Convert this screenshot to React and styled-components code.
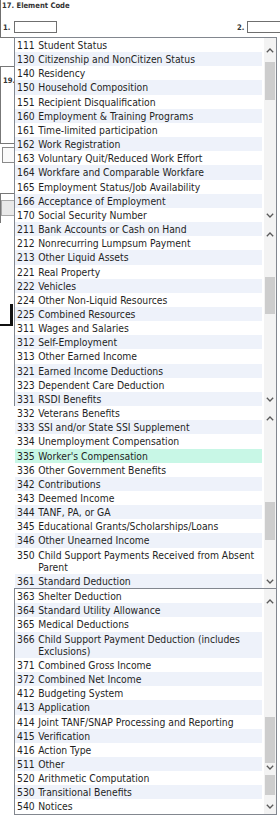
import styled, { createGlobalStyle } from 'styled-components'

// #region data
const panels = [
  {
    stripe: 1,
    borders: { top: true, left: true },
    thumb: { offset: 0, size: 38 },
    items: [
      ['111', 'Student Status'],
      ['130', 'Citizenship and NonCitizen Status'],
      ['140', 'Residency'],
      ['150', 'Household Composition'],
      ['151', 'Recipient Disqualification'],
      ['160', 'Employment & Training Programs'],
      ['161', 'Time-limited participation'],
      ['162', 'Work Registration'],
      ['163', 'Voluntary Quit/Reduced Work Effort'],
      ['164', 'Workfare and Comparable Workfare'],
      ['165', 'Employment Status/Job Availability'],
      ['166', 'Acceptance of Employment'],
      ['170', 'Social Security Number'],
    ],
  },
  {
    stripe: 0,
    borders: { left: true },
    thumb: { offset: 31, size: 37 },
    items: [
      ['211', 'Bank Accounts or Cash on Hand'],
      ['212', 'Nonrecurring Lumpsum Payment'],
      ['213', 'Other Liquid Assets'],
      ['221', 'Real Property'],
      ['222', 'Vehicles'],
      ['224', 'Other Non-Liquid Resources'],
      ['225', 'Combined Resources'],
      ['311', 'Wages and Salaries'],
      ['312', 'Self-Employment'],
      ['313', 'Other Earned Income'],
      ['321', 'Earned Income Deductions'],
      ['323', 'Dependent Care Deduction'],
      ['331', 'RSDI Benefits'],
    ],
  },
  {
    stripe: 1,
    borders: {},
    selected: '335',
    thumb: { offset: 72, size: 38 },
    items: [
      ['332', 'Veterans Benefits'],
      ['333', 'SSI and/or State SSI Supplement'],
      ['334', 'Unemployment Compensation'],
      ['335', "Worker's Compensation"],
      ['336', 'Other Government Benefits'],
      ['342', 'Contributions'],
      ['343', 'Deemed Income'],
      ['344', 'TANF, PA, or GA'],
      ['345', 'Educational Grants/Scholarships/Loans'],
      ['346', 'Other Unearned Income'],
      ['350', 'Child Support Payments Received from Absent Parent'],
      ['361', 'Standard Deduction'],
    ],
  },
  {
    stripe: 1,
    borders: { top: true, left: true, bottom: true },
    thumb: { offset: 104, size: 46 },
    extraThumb: true,
    items: [
      ['363', 'Shelter Deduction'],
      ['364', 'Standard Utility Allowance'],
      ['365', 'Medical Deductions'],
      ['366', 'Child Support Payment Deduction (includes Exclusions)'],
      ['371', 'Combined Gross Income'],
      ['372', 'Combined Net Income'],
      ['412', 'Budgeting System'],
      ['413', 'Application'],
      ['414', 'Joint TANF/SNAP Processing and Reporting'],
      ['415', 'Verification'],
      ['416', 'Action Type'],
      ['511', 'Other'],
      ['520', 'Arithmetic Computation'],
      ['530', 'Transitional Benefits'],
      ['540', 'Notices'],
    ],
  },
]
// #endregion

// #region styles
const GlobalStyle = createGlobalStyle`
  html, body {
    margin: 0;
    padding: 0;
    background: #fff;
  }
  body {
    font-family: "DejaVu Sans Condensed", "DejaVu Sans", sans-serif;
    color: #222;
  }
`

const Page = styled.div`
  width: 280px;
  height: 823px;
  overflow: hidden;
  background: #fff;
`

const Header = styled.div`
  height: 37px;
  box-sizing: border-box;
  border-left: 1px solid #6f6f6f;
  padding: 1px 0 0 1px;
`

const Title = styled.div`
  font-size: 7.6px;
  font-weight: 700;
  line-height: 10px;
  color: #333;
`

const FieldRow = styled.div`
  display: flex;
  justify-content: space-between;
  align-items: center;
  height: 12px;
  margin-top: 10px;
  margin-right: -12px;
`

const Field = styled.div`
  display: flex;
  align-items: center;
`

const FieldLabel = styled.span`
  font-size: 7.6px;
  font-weight: 700;
  color: #333;
  width: ${(p) => p.$width}px;
  padding-left: ${(p) => p.$pad}px;
  box-sizing: border-box;
`

const Box = styled.div`
  width: ${(p) => p.$width}px;
  height: 12px;
  box-sizing: border-box;
  border: 1px solid #6f6f6f;
  background: #fff;
`

const Body = styled.div`
  display: flex;
`

const Gutter = styled.div`
  width: 14px;
  flex: none;
  display: flex;
  flex-direction: column;
`

const GutterBlock = styled.div`
  height: ${(p) => p.$height}px;
  box-sizing: border-box;
  border-top: ${(p) => (p.$top ? '1px solid #777' : 'none')};
  border-left: ${(p) => (p.$left ? '1px solid #777' : 'none')};
  padding: ${(p) => p.$pad || '0'};
  font-size: 7.6px;
  font-weight: 700;
  color: #333;
`

const StubButton = styled.div`
  margin-left: 2px;
  height: 16px;
  box-sizing: border-box;
  border: 1px solid #8a8a8a;
  border-right: none;
  background: #fafafa;
`

const GrayStub = styled.div`
  margin-top: 6px;
  height: 16px;
  box-sizing: border-box;
  border: 1px solid #a8a8a8;
  border-right: none;
  background: #e9e9e9;
`

const Corner = styled.div`
  margin-top: 81px;
  width: 13px;
  height: 22px;
  box-sizing: border-box;
  border-right: 3px solid #111;
  border-bottom: 2px solid #111;
`

const Lists = styled.div`
  width: 263px;
  flex: none;
  display: flex;
  flex-direction: column;
`

const Panel = styled.div`
  display: flex;
  background: #fff;
  border-right: 1px solid #82878f;
  border-left: 1px solid ${(p) => (p.$left ? '#82878f' : 'transparent')};
  border-top: ${(p) => (p.$top ? '1px solid #82878f' : 'none')};
  border-bottom: ${(p) => (p.$bottom ? '1px solid #82878f' : 'none')};
`

const Rows = styled.div`
  flex: 1;
  min-width: 0;
  padding-right: 2px;
  display: flex;
  flex-direction: column;
`

const Row = styled.div`
  display: flex;
  gap: 3.5px;
  padding: 1px 0 1px 2px;
  font-size: 10.3px;
  line-height: 12.15px;
  color: #1f1f1f;
  background: ${(p) => (p.$selected ? '#c8f7e6' : p.$striped ? '#eef2fa' : '#fff')};
`

const Code = styled.span`
  flex: none;
`

const Label = styled.span`
  flex: 1;
  min-width: 0;
`

const ScrollBar = styled.div`
  width: 12px;
  flex: none;
  display: flex;
  flex-direction: column;
  background: #f3f3f3;
`

const Arrow = styled.div`
  height: ${(p) => p.$height}px;
  flex: none;
  display: flex;
  align-items: center;
  justify-content: center;
`

const Track = styled.div`
  flex: 1;
  display: flex;
  flex-direction: column;
  align-items: center;
`

const Thumb = styled.div`
  width: 10px;
  flex: none;
  margin-top: ${(p) => p.$offset}px;
  height: ${(p) => p.$size}px;
  background: #cdcdcd;
`

const RightEdge = styled.div`
  width: 3px;
  flex: none;
`
// #endregion

const Chevron = ({ down }) => (
  <svg width="8" height="5" viewBox="0 0 8 5">
    <polyline
      points={down ? '0.8,0.8 4,4 7.2,0.8' : '0.8,4.2 4,1 7.2,4.2'}
      fill="none"
      stroke="#5a5a5a"
      strokeWidth="1.3"
    />
  </svg>
)

const ListPanel = ({ panel }) => (
  <Panel $top={panel.borders.top} $left={panel.borders.left} $bottom={panel.borders.bottom}>
    <Rows>
      {panel.items.map(([code, text], i) => (
        <Row
          key={code}
          $striped={i % 2 === panel.stripe}
          $selected={panel.selected === code}
        >
          <Code>{code}</Code>
          <Label>{text}</Label>
        </Row>
      ))}
    </Rows>
    <ScrollBar>
      <Arrow $height={24}>
        <Chevron />
      </Arrow>
      <Track>
        <Thumb $offset={panel.thumb.offset} $size={panel.thumb.size} />
        {panel.extraThumb && (
          <>
            <Arrow $height={8}>
              <Chevron down />
            </Arrow>
            <Thumb $offset={4} $size={20} />
          </>
        )}
      </Track>
      <Arrow $height={14}>
        <Chevron down />
      </Arrow>
    </ScrollBar>
  </Panel>
)

export default function App() {
  return (
    <Page>
      <GlobalStyle />
      <Header>
        <Title>17. Element Code</Title>
        <FieldRow>
          <Field>
            <FieldLabel $width={12} $pad={1}>1.</FieldLabel>
            <Box $width={43} />
          </Field>
          <Field>
            <FieldLabel $width={10} $pad={0}>2.</FieldLabel>
            <Box $width={45} />
          </Field>
        </FieldRow>
      </Header>
      <Body>
        <Gutter>
          <GutterBlock $height={29} $top />
          <GutterBlock $height={77} $top $left $pad="9px 0 0 2px">
            19.
          </GutterBlock>
          <GutterBlock $height={50} $top $pad="3px 0 0 0">
            <StubButton />
          </GutterBlock>
          <GutterBlock $height={30} $top $left>
            <GrayStub />
          </GutterBlock>
          <Corner />
        </Gutter>
        <Lists>
          {panels.map((panel) => (
            <ListPanel key={panel.items[0][0]} panel={panel} />
          ))}
        </Lists>
        <RightEdge />
      </Body>
    </Page>
  )
}
